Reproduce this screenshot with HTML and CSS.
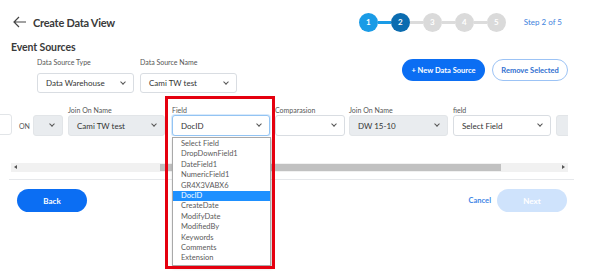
FILE: index.html
```html
<!DOCTYPE html>
<html lang="en">
<head>
    <meta charset="UTF-8">
    <meta name="viewport" content="width=device-width, initial-scale=1.0">
    <title>Create Data View</title>
    <link rel="stylesheet" href="styles.css">
</head>
<body>
    <div class="page">
        <div class="topbar">
            <div class="title">
                <svg class="back-arrow" width="14" height="12" viewBox="0 0 14 12">
                    <path d="M6 1 L1 6 L6 11 M1 6 H13" fill="none" stroke="#444" stroke-width="1.2"/>
                </svg>
                <h1>Create Data View</h1>
            </div>
            <div class="stepper">
                <span class="step done">1</span>
                <span class="line active"></span>
                <span class="step current">2</span>
                <span class="line"></span>
                <span class="step">3</span>
                <span class="line"></span>
                <span class="step">4</span>
                <span class="line"></span>
                <span class="step">5</span>
                <span class="step-text">Step 2 of 5</span>
            </div>
        </div>

        <h2>Event Sources</h2>

        <div class="sources">
            <div class="field w97 gap6">
                <label>Data Source Type</label>
                <div class="select">Data Warehouse</div>
            </div>
            <div class="field w97">
                <label>Data Source Name</label>
                <div class="select">Cami TW test</div>
            </div>
            <div class="actions">
                <button class="btn primary new">+ New Data Source</button>
                <button class="btn outline remove">Remove Selected</button>
            </div>
        </div>

        <div class="joins">
            <div class="joins-inner">
                <div class="stub"></div>
                <span class="on">ON</span>
                <div class="select locked small"></div>
                <div class="field w97 gap7">
                    <label>Join On Name</label>
                    <div class="select locked">Cami TW test</div>
                </div>
                <div class="field w98 gap5">
                    <label>Field</label>
                    <div class="select focus">DocID</div>
                </div>
                <div class="field w70 gap4">
                    <label>Comparasion</label>
                    <div class="select"></div>
                </div>
                <div class="field w99 gap5">
                    <label>Join On Name</label>
                    <div class="select locked">DW 15-10</div>
                </div>
                <div class="field w98 gap5">
                    <label>field</label>
                    <div class="select">Select Field</div>
                </div>
                <div class="select locked tail"></div>
            </div>
        </div>

        <div class="scrollbar">
            <span class="arrow left"></span>
            <div class="thumb"></div>
            <span class="arrow right"></span>
        </div>

        <div class="divider"></div>

        <div class="footer">
            <button class="btn primary wide">Back</button>
            <div class="footer-right">
                <span class="cancel">Cancel</span>
                <button class="btn disabled wide">Next</button>
            </div>
        </div>

        <ul class="dropdown">
            <li>Select Field</li>
            <li>DropDownField1</li>
            <li>DateField1</li>
            <li>NumericField1</li>
            <li>GR4X3VABX6</li>
            <li class="selected">DocID</li>
            <li>CreateDate</li>
            <li>ModifyDate</li>
            <li>ModifiedBy</li>
            <li>Keywords</li>
            <li>Comments</li>
            <li>Extension</li>
        </ul>
        <div class="highlight"></div>
    </div>
</body>
</html>
```

FILE: styles.css
```css
body {
    margin: 0;
    font-family: Lato, "Liberation Sans", sans-serif;
    color: #333;
    background: #fff;
}
.page {
    position: relative;
    width: 589px;
    height: 274px;
    overflow: hidden;
}

/* header */
.topbar {
    display: flex;
    justify-content: space-between;
    align-items: center;
    height: 20px;
    padding-top: 12px;
}
.title {
    display: flex;
    align-items: center;
    padding-left: 13px;
}
.back-arrow {
    margin-right: 6px;
}
h1 {
    margin: 0;
    font-size: 11px;
    font-weight: 700;
    letter-spacing: -0.25px;
    color: #3a3a3a;
}
.stepper {
    display: flex;
    align-items: center;
    padding-right: 27px;
}
.step {
    width: 19px;
    height: 19px;
    border-radius: 50%;
    background: #dadada;
    color: #fff;
    font-size: 8px;
    font-weight: 700;
    display: flex;
    align-items: center;
    justify-content: center;
}
.step.done {
    background: #1a9be6;
}
.step.current {
    background: #0b6cb0;
}
.line {
    width: 13px;
    height: 3px;
    background: #dcdcdc;
}
.line.active {
    background: #1a9be6;
}
.step-text {
    margin-left: 18px;
    font-size: 8px;
    color: #3f82dd;
}

h2 {
    margin: 8px 0 0 11px;
    font-size: 10.5px;
    line-height: 14px;
    font-weight: 700;
    letter-spacing: -0.1px;
    color: #3a3a3a;
}

/* fields */
.sources {
    display: flex;
    padding-left: 37px;
    margin-top: 3px;
}
.field {
    flex: none;
    display: flex;
    flex-direction: column;
}
.field label {
    font-size: 7px;
    line-height: 10px;
    color: #555;
    height: 10px;
    margin-bottom: 6px;
}
.w97 { width: 97px; }
.w98 { width: 98px; }
.w99 { width: 99px; }
.w70 { width: 70px; }
.gap4 { margin-right: 4px; }
.gap5 { margin-right: 5px; }
.gap6 { margin-right: 6px; }
.gap7 { margin-right: 7px; }

.select {
    position: relative;
    box-sizing: border-box;
    height: 20px;
    border: 1px solid #d9dde2;
    border-radius: 3px;
    background: #fff;
    font-size: 8px;
    color: #333;
    padding-left: 8px;
    display: flex;
    align-items: center;
    flex: none;
}
.select::after {
    content: "";
    position: absolute;
    right: 8px;
    top: 6px;
    width: 3px;
    height: 3px;
    border-right: 1.2px solid #555;
    border-bottom: 1.2px solid #555;
    transform: rotate(45deg);
}
.select.locked {
    background: #e9ecef;
    border-color: #e2e5e8;
}
.select.focus {
    border-color: #93c4f3;
    box-shadow: 0 0 0 1px rgba(147, 196, 243, 0.35);
}
.select.small {
    width: 30px;
    margin-right: 5px;
}
.select.tail {
    width: 20px;
}
.select.tail::after {
    display: none;
}

.actions {
    margin-left: auto;
    margin-right: 21px;
    display: flex;
    gap: 7px;
    padding-top: 2px;
}
.btn {
    height: 22px;
    border-radius: 11px;
    font-family: inherit;
    font-size: 7.5px;
    font-weight: 700;
    padding: 0;
    cursor: pointer;
}
.btn.new {
    width: 83px;
}
.btn.remove {
    width: 76px;
}
.btn.primary {
    background: #0b6ef3;
    border: none;
    color: #fff;
}
.btn.outline {
    background: #fff;
    border: 1px solid #9cc3f5;
    color: #2f6fd0;
}
.btn.disabled {
    background: #cfe3fc;
    border: none;
    color: #fff;
}
.btn.wide {
    width: 70px;
    height: 23px;
    border-radius: 12px;
    font-size: 8px;
}

/* join row */
.joins {
    margin-top: 12px;
    overflow: hidden;
    width: 568px;
}
.joins-inner {
    display: flex;
    align-items: flex-end;
    margin-left: -20px;
}
.joins .field label {
    margin-bottom: 0;
}
.joins .select {
    height: 21px;
}
.stub {
    flex: none;
    box-sizing: border-box;
    width: 32px;
    height: 21px;
    border: 1px solid #e2e5e8;
    border-radius: 3px;
    margin-bottom: 1px;
}
.on {
    flex: none;
    width: 14px;
    margin-left: 7px;
    font-size: 7px;
    color: #555;
    height: 21px;
    display: flex;
    align-items: center;
}

/* fake horizontal scrollbar */
.scrollbar {
    position: relative;
    margin: 27px 0 0 11px;
    width: 557px;
    height: 9px;
    background: #f1f1f1;
}
.thumb {
    position: absolute;
    left: 149px;
    width: 341px;
    top: 1px;
    height: 7px;
    background: #c1c1c1;
}
.arrow {
    position: absolute;
    top: 2px;
    width: 0;
    height: 0;
    border-top: 2.5px solid transparent;
    border-bottom: 2.5px solid transparent;
}
.arrow.left {
    left: 3px;
    border-right: 3px solid #555;
}
.arrow.right {
    right: 3px;
    border-left: 3px solid #555;
}

.divider {
    margin: 7px 15px 0 9px;
    height: 1px;
    background: #e6e8eb;
}

.footer {
    display: flex;
    justify-content: space-between;
    align-items: center;
    margin-top: 9px;
    padding: 0 22px 0 17px;
}
.footer-right {
    display: flex;
    align-items: center;
    gap: 6px;
}
.cancel {
    font-size: 7.5px;
    font-weight: 700;
    color: #3f86e6;
}

/* open dropdown overlay */
.dropdown {
    position: absolute;
    left: 172px;
    top: 137px;
    width: 99px;
    box-sizing: border-box;
    margin: 0;
    padding: 1px 0;
    list-style: none;
    background: #fff;
    border: 1px solid #a9a9a9;
    box-shadow: 1px 2px 3px rgba(0, 0, 0, 0.25);
}
.dropdown li {
    height: 10.4px;
    line-height: 10.4px;
    font-size: 7.5px;
    color: #5a5a5a;
    padding-left: 8px;
}
.dropdown li.selected {
    background: #1e90ff;
    color: #fff;
}

/* red annotation frame */
.highlight {
    position: absolute;
    left: 165px;
    top: 96px;
    width: 110px;
    height: 173px;
    box-sizing: border-box;
    border: 3px solid #e5000f;
}
```
